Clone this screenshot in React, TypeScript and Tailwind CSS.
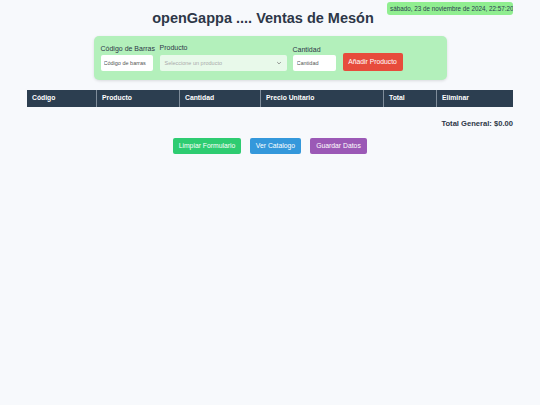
export default function App() {
  const cols = [
    { label: "Código", w: "w-[69px]" },
    { label: "Producto", w: "w-[83px]" },
    { label: "Cantidad", w: "w-[81px]" },
    { label: "Precio Unitario", w: "w-[123px]" },
    { label: "Total", w: "w-[53px]" },
    { label: "Eliminar", w: "flex-1" },
  ];

  return (
    <div className="min-h-[405px] bg-[#f7f9fc] font-['Liberation_Sans',Arial,sans-serif] relative">
      <div className="absolute right-[27px] top-[2px] h-[13px] w-[126px] overflow-hidden whitespace-nowrap rounded-[3px] bg-[#90ee90] px-[3px] text-[6.3px] leading-[13px] text-[#2c3e50]">
        sábado, 23 de noviembre de 2024, 22:57:20
      </div>

      <h1 className="pt-[9px] pr-[14px] text-center text-[14.5px] font-bold leading-[18px] text-[#2d3748]">
        openGappa .... Ventas de Mesón
      </h1>

      <div className="mx-auto mt-[9px] flex w-[353px] items-end rounded-[5px] bg-[#b3f0bb] px-[7px] pt-[7px] pb-[9px] shadow-[0_1px_3px_rgba(0,0,0,0.12)]">
        <div className="flex w-[52px] flex-col">
          <label className="mb-[2px] whitespace-nowrap text-[7px] leading-[9px] text-[#2d3748]">Código de Barras</label>
          <input
            placeholder="Código de barras"
            className="h-[16px] w-[52px] rounded-[2px] bg-white px-[3px] text-[5.5px] placeholder:text-[#555] outline-none"
          />
        </div>
        <div className="ml-[7px] flex flex-col">
          <label className="mb-[3px] text-[7px] leading-[9px] text-[#2d3748]">Producto</label>
          <div className="flex h-[16px] w-[127px] items-center justify-between rounded-[2px] bg-[#e8f9ea] px-[5px] text-[5.5px] text-[#aaa]">
            <span>Seleccione un producto</span>
            <svg width="6" height="6" viewBox="0 0 10 10" className="text-[#777]">
              <path d="M2 3.5l3 3 3-3" fill="none" stroke="currentColor" strokeWidth="1.3" />
            </svg>
          </div>
        </div>
        <div className="ml-[6px] flex flex-col">
          <label className="mb-[1px] text-[7px] leading-[9px] text-[#2d3748]">Cantidad</label>
          <input
            placeholder="Cantidad"
            className="h-[16px] w-[43px] rounded-[2px] bg-white px-[4px] text-[5.5px] placeholder:text-[#555] outline-none"
          />
        </div>
        <button className="ml-[7px] h-[18px] w-[60px] rounded-[2px] bg-[#e74c3c] text-[6.8px] text-white">
          Añadir Producto
        </button>
      </div>

      <div className="mx-[27px] mt-[10px] flex h-[17px] bg-[#2c3e50] text-[6.8px] font-bold text-white">
        {cols.map((c, i) => (
          <div
            key={c.label}
            className={`${c.w} flex items-center px-[5px] ${i > 0 ? "border-l border-[#7f8c9a]" : ""}`}
          >
            {c.label}
          </div>
        ))}
      </div>

      <div className="mx-[27px] mt-[11px] text-right text-[7.6px] font-bold text-[#2d3748]">
        Total General: $0.00
      </div>

      <div className="mt-[9px] flex justify-center gap-[9px] text-[6.8px] text-white">
        <button className="h-[16px] w-[68px] rounded-[2px] bg-[#2ecc71]">Limpiar Formulario</button>
        <button className="h-[16px] w-[51px] rounded-[2px] bg-[#3498db]">Ver Catalogo</button>
        <button className="h-[16px] w-[57px] rounded-[2px] bg-[#9b59b6]">Guardar Datos</button>
      </div>
    </div>
  );
}
